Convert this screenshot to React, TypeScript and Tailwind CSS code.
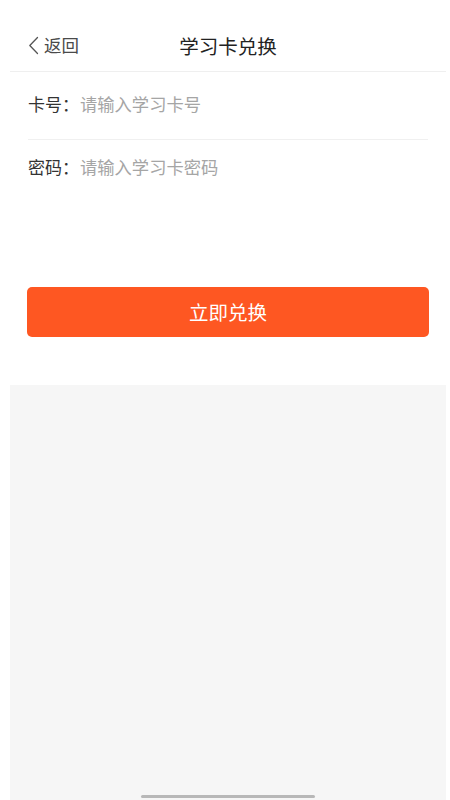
import { useState } from 'react'

const font = { fontFamily: '"Noto Sans CJK SC", "Noto Sans", sans-serif' }

function BackIcon() {
  return (
    <svg width="11" height="19" viewBox="0 0 11 19" fill="none">
      <polyline points="9.5,1.5 1.8,9.5 9.5,17.5" stroke="#555555" strokeWidth="1.3" strokeLinecap="round" strokeLinejoin="round" />
    </svg>
  )
}

function Field({ label, placeholder, value, onChange }: { label: string; placeholder: string; value: string; onChange: (v: string) => void }) {
  return (
    <div className="flex items-center w-full">
      <span className="text-[17px] text-[#333333] leading-6 shrink-0 w-[52px]">{label}</span>
      <input
        value={value}
        onChange={(e) => onChange(e.target.value)}
        placeholder={placeholder}
        className="flex-1 min-w-0 text-[17.3px] leading-6 text-[#333333] placeholder:text-[#a5a5a5] outline-none bg-transparent"
        style={font}
      />
    </div>
  )
}

export default function App() {
  const [cardNo, setCardNo] = useState('')
  const [password, setPassword] = useState('')

  return (
    <div className="w-[450px] h-[800px] bg-white overflow-hidden" style={font}>
      <div className="ml-[10px] w-[436px] h-full flex flex-col">
        {/* Header */}
        <div className="h-[72px] pt-[20px] border-b border-[#efefef] grid grid-cols-[1fr_auto_1fr] items-center shrink-0">
          <button className="flex items-center gap-[5px] pl-[18px] justify-self-start">
            <BackIcon />
            <span className="text-[17.5px] text-[#4a4a4a]">返回</span>
          </button>
          <h1 className="text-[19.5px] text-[#222222]">学习卡兑换</h1>
          <div />
        </div>

        {/* Form */}
        <div className="px-[18px] flex flex-col shrink-0">
          <div className="h-[68px] pb-[4px] flex items-center border-b border-[#f0f0f0]">
            <Field label="卡号：" placeholder="请输入学习卡号" value={cardNo} onChange={setCardNo} />
          </div>
          <div className="h-[53px] flex items-center">
            <Field label="密码：" placeholder="请输入学习卡密码" value={password} onChange={setPassword} />
          </div>
        </div>

        {/* Submit */}
        <div className="px-[17px] mt-[94px] shrink-0">
          <button className="w-full h-[50px] rounded-[5px] bg-[#fe5722] text-white text-[19.5px] flex items-center justify-center">
            立即兑换
          </button>
        </div>

        {/* Gray area */}
        <div className="mt-[48px] flex-1 bg-[#f6f6f6] flex flex-col justify-end items-center pb-[2px]">
          <div className="w-[174px] h-[3px] rounded-full bg-[#b8b8b8]" />
        </div>
      </div>
    </div>
  )
}
